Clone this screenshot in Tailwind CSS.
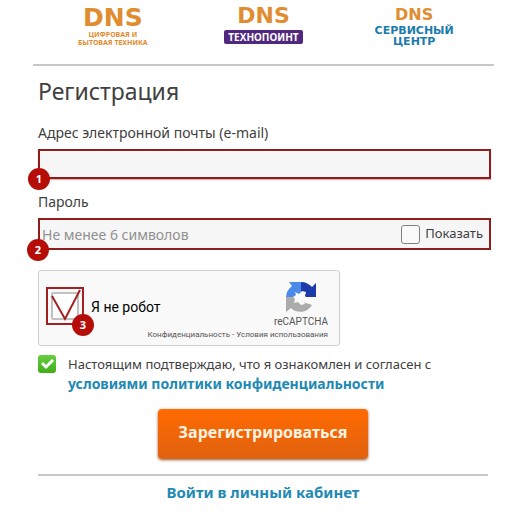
<!DOCTYPE html>
<html lang="ru">
  <head>
    <meta charset="UTF-8" />
    <meta name="viewport" content="width=device-width, initial-scale=1.0" />
    <title>DNS - Регистрация</title>
    <script src="https://cdn.jsdelivr.net/npm/@tailwindcss/browser@4"></script>
  </head>
  <body class="bg-white font-['Noto_Sans',sans-serif] text-[15px] text-[#404040]">
    <div class="px-[33px]">
      <header class="grid grid-cols-3 h-[66px] pt-1 border-b-2 border-[#c8c8c8] text-center font-bold">
        <a href="#" class="flex flex-col items-center pt-[2px] pl-[6px] text-[#df8d30]">
          <span class="font-['DejaVu_Sans',sans-serif] text-[25px] leading-6">DNS</span>
          <span class="mt-[1px] text-[7px] leading-2 uppercase whitespace-nowrap">Цифровая и<br />бытовая техника</span>
        </a>
        <a href="#" class="flex flex-col items-center text-[#df8d30]">
          <span class="font-['DejaVu_Sans',sans-serif] text-[22px] leading-6">DNS</span>
          <span class="mt-[2px] px-1 rounded-[2px] bg-[#51287f] text-white text-[10px] leading-[14px]">ТЕХНОПОИНТ</span>
        </a>
        <a href="#" class="flex flex-col items-center pr-[6px] text-[#df8d30]">
          <span class="font-['DejaVu_Sans',sans-serif] text-[16px] leading-5 pt-[1px]">DNS</span>
          <span class="font-['DejaVu_Sans',sans-serif] text-[11px] leading-[11px] text-[#1b7bab] whitespace-nowrap">СЕРВИСНЫЙ<br />ЦЕНТР</span>
        </a>
      </header>

      <form class="pl-[5px] pr-[3px]">
        <h1 class="mt-[9px] text-[23px] leading-8">Регистрация</h1>

        <label for="email" class="block mt-4 text-[14px] leading-5">Адрес электронной почты (e-mail)</label>
        <div class="relative mt-[6px]">
          <input id="email" type="email" class="block w-full h-[30px] px-1 bg-[#f6f6f6] border-2 border-[#8e1d1d] outline-none shadow-[0_1px_1px_#e8b0b0]" />
          <span class="absolute -left-[10px] -bottom-[11px] size-[22px] rounded-full bg-[#b50d08] text-white text-[11px] leading-[22px] font-bold text-center">1</span>
        </div>

        <label for="password" class="block mt-[13px] text-[14px] leading-5">Пароль</label>
        <div class="relative flex items-center mt-[6px] h-8 pl-[2px] pr-[6px] bg-[#f6f6f6] border-2 border-[#8e1d1d]">
          <input id="password" type="password" placeholder="Не менее 6 символов" class="flex-1 min-w-0 text-[14px] outline-none placeholder:text-[#909090]" />
          <input id="show" type="checkbox" class="appearance-none size-[19px] mr-[5px] border border-[#808080] rounded-[3px] bg-[#fafafa]" />
          <label for="show" class="text-[13px]">Показать</label>
          <span class="absolute -left-[13px] -bottom-[13px] size-[22px] rounded-full bg-[#b50d08] text-white text-[11px] leading-[22px] font-bold text-center">2</span>
        </div>

        <!-- reCAPTCHA -->
        <div class="relative flex items-center mt-5 w-[302px] h-[76px] pl-[7px] bg-[#f9f9f9] border border-[#d0d0d0] rounded-[3px] font-[Roboto,sans-serif]">
          <div class="relative grid place-items-center size-[38px] -mt-[4px] border-2 border-[#a31f22]">
            <input id="robot" type="checkbox" class="appearance-none size-7 border-2 border-[#c1c1c1] rounded-[2px] bg-white" />
            <svg class="absolute inset-0 pointer-events-none" width="34" height="34" viewBox="0 0 34 34" fill="none" stroke="#a31f22" stroke-width="2">
              <path d="M4 7 17 30 32 1" />
            </svg>
            <span class="absolute -right-[12px] -bottom-[13px] size-[22px] rounded-full bg-[#b50d08] text-white text-[11px] leading-[22px] font-bold font-['Noto_Sans',sans-serif] text-center">3</span>
          </div>
          <label for="robot" class="ml-[7px] -mt-[2px] text-[14px] text-black">Я не робот</label>
          <div class="absolute right-[11px] top-[10px] flex flex-col items-end">
            <svg class="mr-[11px]" width="32" height="32" viewBox="0 0 32 32">
              <path fill="#4a8ae8" d="M16 1H4l3 4C3 8 1 12 1 17h11l4-5z" />
              <path fill="#1c3aa9" d="M16 1c5 0 8 2 11 5l4-4v14H18l-2-4z" />
              <path fill="#ababab" d="M1 16h13l4 5 9 3c-5 8-15 9-21 3l-5 4z" />
              <path fill="#f9f9f9" d="m10 11 4 2 3-3 4 1-1 4 2 2-4 2 2 4-4 1-3-3-4 1 1-4-2-2 3-2z" />
            </svg>
            <span class="text-[10px] leading-[17px] text-[#555]">reCAPTCHA</span>
            <span class="text-[8px] leading-[10px] text-[#555] whitespace-nowrap"><a href="#">Конфиденциальность</a> - <a href="#">Условия использования</a></span>
          </div>
        </div>

        <div class="flex mt-[9px]">
          <div class="relative shrink-0 size-[18px] mr-3">
            <input id="agree" type="checkbox" checked class="block appearance-none size-[18px] rounded-[3px] bg-linear-to-b from-[#68ce42] to-[#3eae16]" />
            <svg class="absolute inset-0 pointer-events-none" width="18" height="18" viewBox="0 0 18 18" fill="none" stroke="#fff" stroke-width="3">
              <path d="m4 8 4 4 7-7" />
            </svg>
          </div>
          <label for="agree" class="text-[13px] leading-[19px]">
            Настоящим подтверждаю, что я ознакомлен и согласен с<br />
            <a href="#" class="text-[14px] font-bold text-[#2189b4]">условиями политики конфиденциальности</a>
          </label>
        </div>

        <div class="mr-[3px] text-center">
          <button type="submit" class="block mx-auto mt-[15px] w-[210px] h-[50px] pb-1 rounded-[4px] bg-linear-to-b from-[#ff6a00] to-[#e0620f] text-[#fff3e0] text-[16px] font-bold shadow-[0_1px_3px_#8a5a3a]">Зарегистрироваться</button>
          <div class="mt-[15px] pt-[5px] border-t-2 border-[#c8c8c8]">
            <a href="#" class="text-[15px] leading-5 font-bold text-[#2189b4]">Войти в личный кабинет</a>
          </div>
        </div>
      </form>
    </div>
  </body>
</html>
